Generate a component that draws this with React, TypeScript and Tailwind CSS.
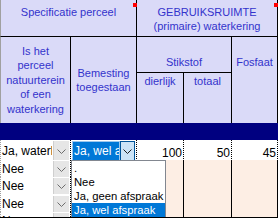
import React from "react";

const FONT = "font-['Liberation_Sans',Arial,sans-serif]";
const HDR = "bg-[#dadaf8] text-[#3333cc] text-[11px]";
const COLS = "grid grid-cols-[71px_66px_47px_48px_46px]";

function Chevron({ color = "#6d6d6d" }: { color?: string }) {
  return (
    <svg width="9" height="5" viewBox="0 0 9 5">
      <path d="M0.5 0.5 L4.5 4.5 L8.5 0.5" fill="none" stroke={color} strokeWidth="1" />
    </svg>
  );
}

function ComboCell({ value }: { value: string }) {
  return (
    <div className="relative flex items-center bg-white border-l border-l-[#a0a0a0] border-r border-r-black border-b border-dotted border-b-[#f5a04a]">
      <span className="w-[51px] overflow-hidden whitespace-nowrap pl-[1px] text-[12px] text-black">
        {value}
      </span>
      <span className="absolute right-[1px] top-[1px] bottom-[1px] w-[16px] flex items-center justify-center bg-[#e6e6e6] border-l border-[#cfcfcf]">
        <Chevron />
      </span>
    </div>
  );
}

function NumCell({ value, first }: { value?: string; first?: boolean }) {
  return (
    <div
      className={`flex items-end justify-end pr-[1px] text-[12px] text-black border-r border-r-black ${
        first ? "bg-white border-b border-dotted border-b-[#f5a04a]" : "bg-[#fdeee4]"
      }`}
    >
      {value}
    </div>
  );
}

export default function App() {
  const rows = ["Nee", "Nee", "Nee", "Nee"];
  const heights = ["h-[17px]", "h-[18px]", "h-[17px]", "h-[18px]"];
  const options = [".", "Nee", "Ja, geen afspraak", "Ja, wel afspraak"];

  return (
    <div className={`relative w-[278px] h-[218px] overflow-hidden bg-white ${FONT}`}>
      {/* kop */}
      <div className={`${COLS} grid-rows-[37px_36px_50px]`}>
        <div
          className={`${HDR} relative col-span-2 flex justify-center pt-[6px] leading-[13.5px] border-l border-l-[#a0a0a0] border-r border-r-black border-b border-b-black`}
        >
          Specificatie perceel
          <span className="absolute top-[3px] right-[-1px] w-[4px] h-[4px] bg-[#ff0000]" />
        </div>
        <div
          className={`${HDR} relative col-span-3 flex flex-col items-center pt-[6px] leading-[13.5px] border-r border-r-black border-b border-b-black`}
        >
          <span>GEBRUIKSRUIMTE</span>
          <span>(primaire) waterkering</span>
          <span className="absolute top-[3px] right-[-1px] w-[4px] h-[4px] bg-[#ff0000]" />
        </div>
        <div
          className={`${HDR} row-span-2 flex items-center justify-center text-center leading-[14.5px] border-l border-l-[#a0a0a0] border-r border-r-black`}
        >
          Is het
          <br />
          perceel
          <br />
          natuurterein
          <br />
          of een
          <br />
          waterkering
        </div>
        <div
          className={`${HDR} row-span-2 flex items-center justify-center text-center leading-[14px] border-r border-r-black`}
        >
          Bemesting
          <br />
          toegestaan
        </div>
        <div
          className={`${HDR} col-span-2 flex items-end justify-center pb-[3px] leading-[13.5px] border-r border-r-black border-b border-b-black`}
        >
          Stikstof
        </div>
        <div
          className={`${HDR} row-span-2 flex justify-center pt-[19px] leading-[13.5px] border-r border-r-black`}
        >
          Fosfaat
        </div>
        <div className={`${HDR} flex justify-center pt-[2px] leading-[13.5px] border-r border-r-black`}>
          dierlijk
        </div>
        <div className={`${HDR} flex justify-center pt-[2px] leading-[13.5px] border-r border-r-black`}>
          totaal
        </div>
      </div>

      {/* blauwe balk */}
      <div className="h-[17px] bg-[#000080]" />

      {/* eerste regel */}
      <div className={`${COLS} h-[20px]`}>
        <ComboCell value="Ja, waterkering" />
        <div className="flex items-stretch p-[1px] bg-white border-r border-r-black border-b border-dotted border-b-[#f5a04a]">
          <span className="w-[49px] flex items-center overflow-hidden whitespace-nowrap bg-[#0078d7] border border-[#9cc8ee] pl-[1px] text-[12px] text-white">
            Ja, wel afspraak
          </span>
          <span className="w-[15px] flex items-center justify-center bg-[#cce4f7] border border-[#005499]">
            <Chevron color="#1f1f1f" />
          </span>
        </div>
        <NumCell value="100" first />
        <NumCell value="50" first />
        <NumCell value="45" first />
      </div>

      {rows.map((r, i) => (
        <div key={i} className={`${COLS} ${heights[i]}`}>
          <ComboCell value={r} />
          <div className="bg-white border-r border-r-black" />
          <NumCell />
          <NumCell />
          <NumCell />
        </div>
      ))}

      {/* open keuzelijst */}
      <div className="absolute left-[71px] top-[160px] w-[95px] bg-white border border-[#828790]">
        {options.map((o, i) => (
          <div
            key={o}
            className={`h-[14px] leading-[14px] pl-[2px] text-[11.25px] whitespace-nowrap overflow-hidden ${
              i === 3 ? "bg-[#0078d7] text-white" : "text-black"
            }`}
          >
            {o}
          </div>
        ))}
      </div>

      {/* onderrand */}
      <div className="absolute left-0 right-0 bottom-0 h-px bg-black" />
    </div>
  );
}
